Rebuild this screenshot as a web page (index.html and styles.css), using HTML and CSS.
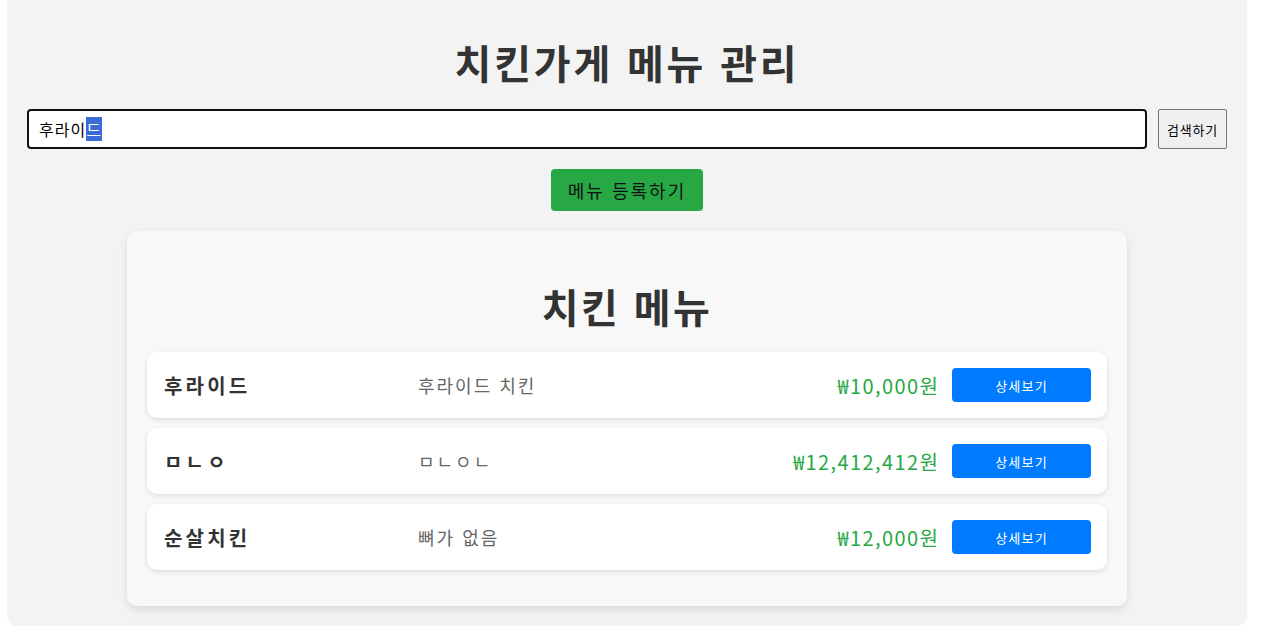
FILE: index.html
```html
<!DOCTYPE html>
<html lang="ko">
<head>
    <meta charset="UTF-8">
    <meta name="viewport" content="width=device-width, initial-scale=1.0">
    <title>치킨가게 메뉴 관리</title>
    <link rel="stylesheet" href="styles.css">
</head>
<body>

    <div class="container">
        <h1>치킨가게 메뉴 관리</h1>

        <form class="search-bar" id="search-form">
            <input type="text" id="search" name="search" value="후라이드">
            <button type="submit">검색하기</button>
        </form>

        <div class="actions">
            <button class="add-btn">메뉴 등록하기</button>
        </div>

        <section class="menu-card">
            <h2>치킨 메뉴</h2>
            <ul class="menu-list">
                <li class="menu-item">
                    <span class="name">후라이드</span>
                    <span class="desc">후라이드 치킨</span>
                    <span class="price">₩10,000원</span>
                    <button class="detail-btn">상세보기</button>
                </li>
                <li class="menu-item">
                    <span class="name">ㅁㄴㅇ</span>
                    <span class="desc">ㅁㄴㅇㄴ</span>
                    <span class="price">₩12,412,412원</span>
                    <button class="detail-btn">상세보기</button>
                </li>
                <li class="menu-item">
                    <span class="name">순살치킨</span>
                    <span class="desc">뼈가 없음</span>
                    <span class="price">₩12,000원</span>
                    <button class="detail-btn">상세보기</button>
                </li>
            </ul>
        </section>
    </div>

    <script>
        const search = document.getElementById('search');
        search.focus();
        search.setSelectionRange(3, 4);

        document.getElementById('search-form').addEventListener('submit', function(e) {
            e.preventDefault();
        });
    </script>

</body>
</html>
```

FILE: styles.css
```css
body {
    font-family: 'Noto Sans CJK KR', 'Noto Sans', sans-serif;
    background-color: #fff;
    color: #333;
    margin: 0;
    padding: 0;
}
.container {
    width: 1240px;
    margin: 0 0 12px 7px;
    padding: 38px 20px 20px;
    box-sizing: border-box;
    background-color: #f3f3f3;
    border-radius: 0 0 10px 10px;
}
h1 {
    margin: 0 0 23px;
    font-size: 40px;
    line-height: 48px;
    letter-spacing: 2.8px;
    text-align: center;
    color: #333;
}
.search-bar {
    display: flex;
    gap: 11px;
    margin: 0;
}
.search-bar input {
    flex: 1;
    height: 40px;
    box-sizing: border-box;
    padding: 0 10px;
    border: 2px solid #111;
    border-radius: 4px;
    font-family: inherit;
    font-size: 16px;
    letter-spacing: 1px;
    color: #000;
    background: #fff;
    outline: none;
}
.search-bar input::selection {
    background: #3a6bd6;
    color: #fff;
}
.search-bar button {
    width: 69px;
    height: 40px;
    padding: 0;
    border: 1px solid #767676;
    border-radius: 2px;
    background: #efefef;
    font-family: inherit;
    font-size: 13px;
    letter-spacing: 0.8px;
    color: #000;
}
.actions {
    display: flex;
    justify-content: center;
    margin: 20px 0;
}
.add-btn {
    width: 152px;
    height: 42px;
    padding: 0;
    border: none;
    border-radius: 4px;
    background: #28a745;
    color: #111;
    font-family: inherit;
    font-size: 18px;
    letter-spacing: 2px;
}
.menu-card {
    width: 1000px;
    margin: 0 auto;
    padding: 31px 20px 20px;
    box-sizing: border-box;
    background-color: #f8f8f8;
    border-radius: 10px;
    box-shadow: 0 4px 8px rgba(0, 0, 0, 0.1);
}
.menu-card h2 {
    margin: 20px 0 22px;
    font-size: 40px;
    line-height: 48px;
    letter-spacing: 2.4px;
    text-align: center;
    color: #333;
}
.menu-list {
    list-style: none;
    margin: 0 0 16px;
    padding: 0;
    display: flex;
    flex-direction: column;
    gap: 10px;
}
.menu-item {
    display: grid;
    grid-template-columns: 240px 1fr auto auto;
    align-items: center;
    column-gap: 14px;
    height: 66px;
    padding: 0 16px 0 17px;
    box-sizing: border-box;
    background: #fff;
    border-radius: 10px;
    box-shadow: 0 2px 5px rgba(0, 0, 0, 0.1);
}
.menu-item .name {
    font-size: 20px;
    font-weight: bold;
    letter-spacing: 3.2px;
    color: #333;
}
.menu-item .desc {
    font-size: 18px;
    letter-spacing: 2px;
    color: #666;
}
.menu-item .price {
    margin-right: -1.4px;
    font-size: 20px;
    letter-spacing: 1.4px;
    color: #28a745;
    text-align: right;
}
.detail-btn {
    width: 139px;
    height: 34px;
    border: none;
    border-radius: 4px;
    background: #007bff;
    color: #fff;
    font-family: inherit;
    font-size: 13px;
    letter-spacing: 1.2px;
}
```
